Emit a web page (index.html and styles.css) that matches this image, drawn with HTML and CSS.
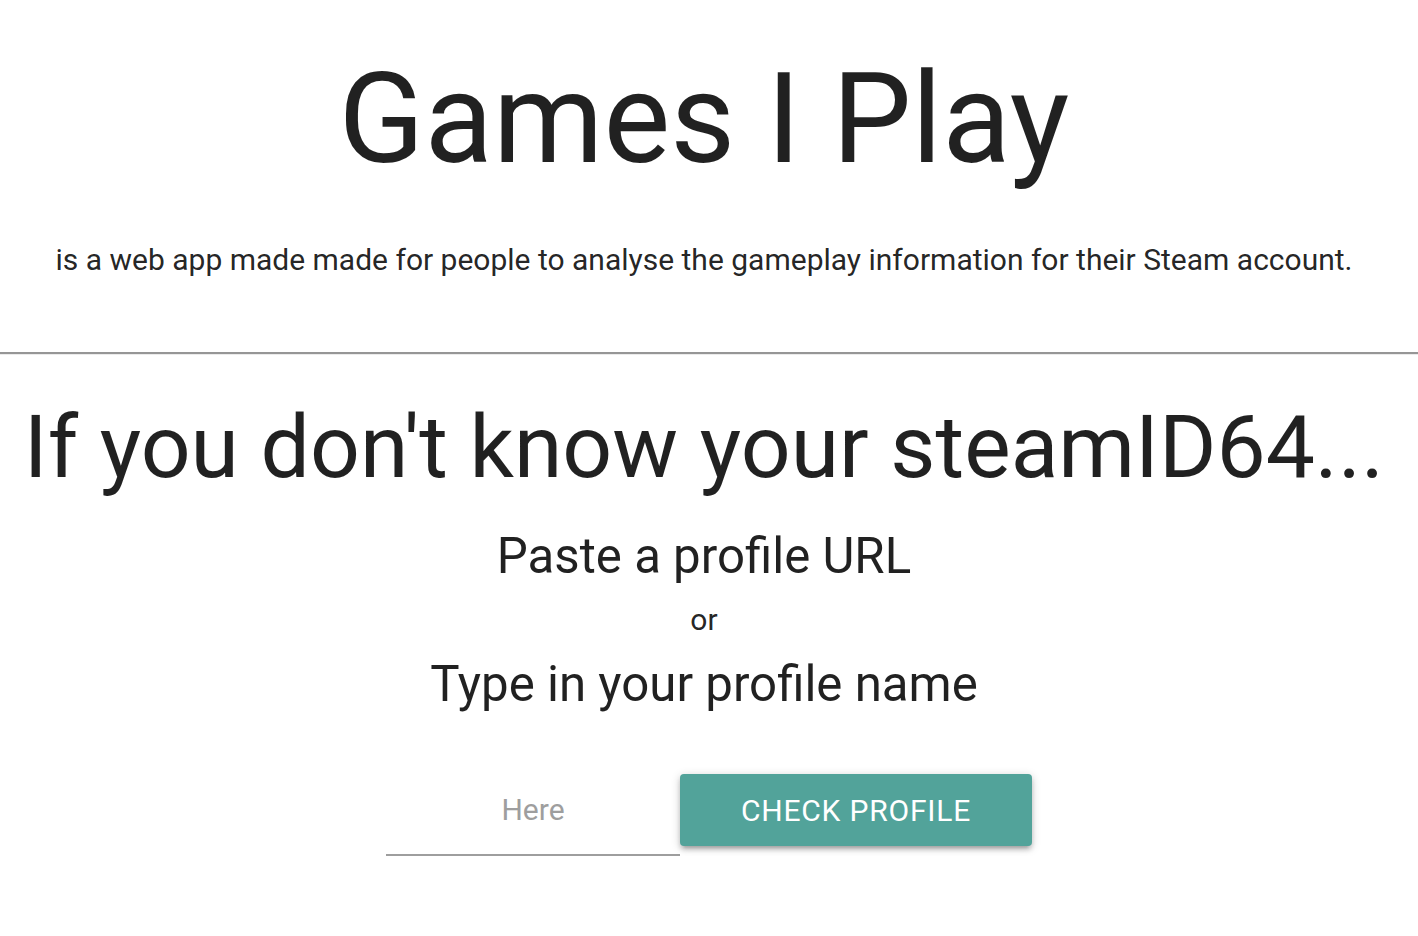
FILE: index.html
```html
<!DOCTYPE html>
<html lang="en">
<head>
<meta charset="utf-8">
<title>Games I Play</title>
<link rel="stylesheet" href="styles.css">
</head>
<body>
<header class="intro">
  <h1 class="title">Games I Play</h1>
  <p class="tagline">is a web app made made for people to analyse the gameplay information for their Steam account.</p>
</header>
<hr class="divider">
<main class="lookup">
  <div class="lookup-text">
    <h2 class="lookup-heading">If you don't know your steamID64...</h2>
    <h3 class="option option-first">Paste a profile URL</h3>
    <p class="or">or</p>
    <h3 class="option">Type in your profile name</h3>
  </div>
  <form class="lookup-form">
    <input class="profile-input" type="text" placeholder="Here">
    <button class="check-btn" type="button">CHECK PROFILE</button>
  </form>
</main>
</body>
</html>
```
FILE: styles.css
```css
html, body {
  margin: 0;
  padding: 0;
  background: #fff;
}
body {
  font-family: Roboto, "Noto Sans", sans-serif;
  color: rgba(0,0,0,0.87);
}
.intro {
  display: flex;
  flex-direction: column;
  align-items: center;
  padding-top: 50px;
  padding-right: 10px;
}
.title {
  margin: 0;
  font-size: 126px;
  font-weight: 400;
  line-height: 138.6px;
}
.tagline {
  margin: 48.7px 0 0;
  font-size: 30px;
  line-height: 45px;
}
.divider {
  margin: 70px 0 0;
  border: 0;
  border-top: 2px solid #969696;
  border-bottom: 1px solid #ebebeb;
  height: 0;
}
.lookup {
  display: flex;
  flex-direction: column;
  align-items: center;
}
.lookup-text {
  display: flex;
  flex-direction: column;
  align-items: center;
  align-self: stretch;
  padding-right: 10px;
}
.lookup-heading {
  margin: 44px 0 0;
  font-size: 87.6px;
  font-weight: 400;
  line-height: 96.4px;
  white-space: nowrap;
}
.option {
  margin: 0;
  font-size: 49.2px;
  font-weight: 400;
  line-height: 54.1px;
}
.option-first {
  margin-top: 33.7px;
}
.or {
  margin: 13.2px 0 14.9px;
  font-size: 30px;
  line-height: 45px;
}
.lookup-form {
  display: flex;
  align-items: flex-start;
  margin-top: 63.8px;
}
.profile-input {
  width: 294px;
  height: 82px;
  box-sizing: border-box;
  border: 0;
  border-bottom: 2px solid #9e9e9e;
  outline: none;
  text-align: center;
  font-family: Roboto, "Noto Sans", sans-serif;
  font-size: 30px;
  color: rgba(0,0,0,0.87);
  background: transparent;
  padding: 0 0 10px;
  margin: 0;
}
.profile-input::placeholder {
  color: #9e9e9e;
}
.check-btn {
  width: 352px;
  height: 72px;
  border: 0;
  border-radius: 4px;
  background: #52a39a;
  color: #fff;
  font-family: Roboto, "Noto Sans", sans-serif;
  font-size: 30px;
  letter-spacing: 0.8px;
  box-shadow: 0 4px 4px 0 rgba(0,0,0,0.14), 0 6px 2px -4px rgba(0,0,0,0.12), 0 2px 10px 0 rgba(0,0,0,0.2);
  padding: 0;
  margin: 0;
  cursor: pointer;
}
```
